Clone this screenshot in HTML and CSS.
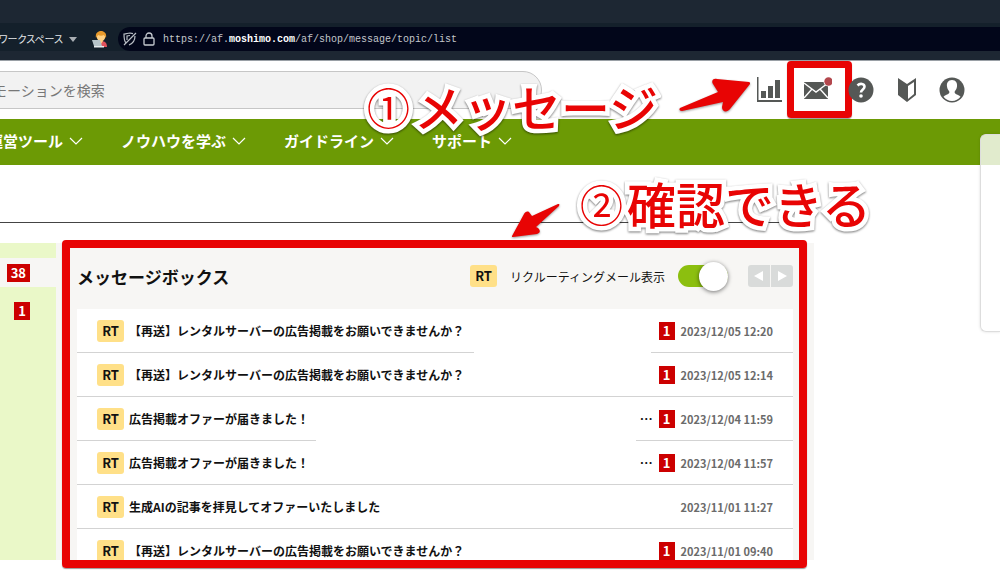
FILE: index.html
```html
<!DOCTYPE html>
<html lang="ja">
<head>
<meta charset="utf-8">
<title>メッセージボックス</title>
<link rel="stylesheet" href="styles.css">
</head>
<body>
<div class="browser">
  <div class="toolbar">
    <span class="workspace">ワークスペース</span>
    <svg class="caret" width="8" height="5" viewBox="0 0 8 5"><path d="M0 0h8L4 5z" fill="#a9aeb3"/></svg>
    <svg class="avatar" width="16" height="17" viewBox="0 0 16 17"><path d="M3 16c0-5 2-6 6-6s6 2 6 6z" fill="#e0525c"/><circle cx="9" cy="6" r="4.200" fill="#ffd083"/><path d="M4 7C3 2 6 0 9 0s6 2 5 7l-2-3c-2 1-4 1-6 0z" fill="#e89a2c"/><path d="M7 10h4l-2 3z" fill="#ffd083"/><path d="M0 9h8l2 6H2z" fill="#b6c4c9"/><path d="M2 15h10v1.500H2z" fill="#e6ecee"/></svg>
    <div class="address">
      <svg width="14" height="14" viewBox="0 0 14 14" fill="none" stroke="#b9bec5" stroke-width="1.200"><path d="M3 11C1 9 1 6 1 2c3 0 3-1 6-1l3 .7M12 4c0 4-1 7-6 9M1 13 13 1M4 8V4l3-.5"/></svg>
      <svg width="12" height="14" viewBox="0 0 12 14" fill="none" stroke="#c6cad0" stroke-width="1.300"><rect x="1" y="6" width="10" height="7" rx="1"/><path d="M3 6V4a3 3 0 0 1 6 0v2"/></svg>
      <span class="url">https://af.<b>moshimo.com</b>/af/shop/message/topic/list</span>
    </div>
  </div>
</div>

<header class="header">
  <input class="search" type="search" placeholder="モーションを検索" aria-label="プロモーションを検索">
  <div class="tools">
    <button class="tool" aria-label="レポート"><svg width="26" height="26" viewBox="0 0 26 26" fill="#555856"><path d="M1 0h1.500v23H26v2H1zM5 14h5v7H5zM12 9h5v12h-5zM19 3h5v18h-5z"/></svg></button>
    <button class="tool mail" aria-label="メッセージ"><svg width="30" height="26" viewBox="0 0 30 26"><path d="M2 5h24v17H2z" fill="#555856"/><path d="m2 6 12 9L26 6M2 21l8-9M26 21l-8-9" fill="none" stroke="#fff" stroke-width="1.400"/><circle cx="26.500" cy="4.500" r="5" fill="#fff"/><circle cx="26.500" cy="4.500" r="4.200" fill="#b3474d"/></svg><span class="frame frame-mail"></span></button>
    <button class="tool" aria-label="ヘルプ"><svg width="26" height="26" viewBox="0 0 26 26"><circle cx="13" cy="13" r="12.500" fill="#555856"/><path d="M9.500 8.500C12 6 16.500 6.500 16.500 9.800c0 2.600-3.500 2.700-3.500 5.700" fill="none" stroke="#fff" stroke-width="2.600"/><circle cx="13" cy="19" r="1.800" fill="#fff"/></svg></button>
    <button class="tool" aria-label="初心者ガイド"><svg width="20" height="26" viewBox="0 0 20 26"><path d="m1 1 9 6 9-6v17l-9 7-9-7z" fill="#555856"/><path d="m11 9 6-4v12l-6 5z" fill="#fff"/></svg></button>
    <button class="tool" aria-label="アカウント"><svg width="26" height="26" viewBox="0 0 26 26"><circle cx="13" cy="13" r="12.500" fill="#555856"/><path d="M13 3c-4 0-5.500 3-5 6.500C8.300 12 9.500 13 10.300 14.500c.5 2-1 2.500-2.800 3.200-1.500.6-2.500 1.300-3 2 2 2.500 5 4.300 8.500 4.300s6.500-1.800 8.500-4.300c-.5-.7-1.500-1.400-3-2-1.800-.7-3.300-1.200-2.800-3.200.8-1.500 2-2.500 2.300-5C18.500 6 17 3 13 3z" fill="#fff"/></svg></button>
  </div>
</header>

<nav class="nav">
  <a href="#tools">運営ツール<svg width="14" height="8" viewBox="0 0 14 8"><path d="m1 1 6 6 6-6"/></svg></a>
  <a href="#learn">ノウハウを学ぶ<svg width="14" height="8" viewBox="0 0 14 8"><path d="m1 1 6 6 6-6"/></svg></a>
  <a href="#guide">ガイドライン<svg width="14" height="8" viewBox="0 0 14 8"><path d="m1 1 6 6 6-6"/></svg></a>
  <a href="#support">サポート<svg width="14" height="8" viewBox="0 0 14 8"><path d="m1 1 6 6 6-6"/></svg></a>
</nav>

<main class="main">
  <div class="rule"></div>
  <div class="columns">
    <aside class="side">
      <a class="side-item current" href="#inbox"><span class="count">38</span></a>
      <a class="side-item" href="#unread"><span class="count">1</span></a>
    </aside>
    <section class="panel">
      <div class="panel-body">
        <div class="panel-head">
          <h1>メッセージボックス</h1>
          <span class="rt">RT</span>
          <label class="switch">リクルーティングメール表示<input type="checkbox" role="switch" checked></label>
          <div class="pager">
            <button aria-label="前へ"><svg width="10" height="10" viewBox="0 0 10 10"><path d="M9 0v10L0 5z" fill="#fff"/></svg></button>
            <button aria-label="次へ"><svg width="10" height="10" viewBox="0 0 10 10"><path d="M1 0v10l9-5z" fill="#fff"/></svg></button>
          </div>
        </div>
        <ul class="list">
          <li class="wide"><div class="subject"><span class="rt">RT</span><a href="#m1">【再送】レンタルサーバーの広告掲載をお願いできませんか？</a></div><div class="meta"><span class="count">1</span><time>2023/12/05 12:20</time></div></li>
          <li class="wide full"><div class="subject"><span class="rt">RT</span><a href="#m2">【再送】レンタルサーバーの広告掲載をお願いできませんか？</a></div><div class="meta"><span class="count">1</span><time>2023/12/05 12:14</time></div></li>
          <li class="short"><div class="subject"><span class="rt">RT</span><a href="#m3">広告掲載オファーが届きました！</a></div><div class="meta"><span class="more">…</span><span class="count">1</span><time>2023/12/04 11:59</time></div></li>
          <li class="short full"><div class="subject"><span class="rt">RT</span><a href="#m4">広告掲載オファーが届きました！</a></div><div class="meta"><span class="more">…</span><span class="count">1</span><time>2023/12/04 11:57</time></div></li>
          <li class="full"><div class="subject"><span class="rt">RT</span><a href="#m5">生成AIの記事を拝見してオファーいたしました</a></div><div class="meta"><time>2023/11/01 11:27</time></div></li>
          <li class="full"><div class="subject"><span class="rt">RT</span><a href="#m6">【再送】レンタルサーバーの広告掲載をお願いできませんか？</a></div><div class="meta"><span class="count">1</span><time>2023/11/01 09:40</time></div></li>
        </ul>
      </div>
      <span class="frame frame-panel"></span>
    </section>
  </div>
</main>

<div class="float-tab"></div>

<p class="note note-one"><span>①</span>メッセージ</p>
<svg class="arrow arrow-one" width="74" height="40" viewBox="0 0 74 40"><path d="M1 33 39 17 34 9c-2-3 0-6 4-5l32 3c1 0 1 1 1 2L51 34c-3 4-8 3-8-2l1-5L3 36c-3 0-3-2-2-3z"/></svg>
<p class="note note-two"><span>②</span>確認できる</p>
<svg class="arrow arrow-two" width="50" height="38" viewBox="0 0 50 38"><path d="M47 2 21 14l-3-4c-2-1-4 0-5 2L1 34c0 1 0 1 1 1l24-3c3-1 4-3 1-6l-2-1L48 4c1-2 0-2-1-2z"/></svg>
</body>
</html>
```
FILE: styles.css
```css
* { box-sizing: border-box; }

body {
  margin: 0;
  position: relative;
  min-height: 100vh;
  overflow: hidden;
  background: #fff;
  color: #111;
  font-family: "Noto Sans CJK JP", sans-serif;
  font-size: 12px;
}

button { border: 0; padding: 0; background: none; }
svg { display: block; flex: none; }
a { color: inherit; text-decoration: none; }

.browser {
  padding: 23px 0 9px;
  background: #1d2733;
  border-bottom: 1px solid #9aa0a6;
}
.toolbar {
  display: flex;
  align-items: center;
  padding-top: 4px;
  background: #14202b;
  color: #e6e8ea;
}
.workspace {
  font-size: 10px;
  line-height: 16px;
  width: 63px;
  display: flex;
  justify-content: flex-end;
  white-space: nowrap;
  font-feature-settings: "palt";
}
.caret { margin-left: 6px; }
.avatar { margin-left: 15px; }
.address {
  flex: 1;
  display: flex;
  align-items: center;
  gap: 6px;
  height: 24px;
  margin-left: 10px;
  padding-left: 5px;
  border-radius: 12px 0 0 12px;
  background: #02061a;
}
.url {
  font-family: "Liberation Mono", monospace;
  font-size: 10px;
  color: #c3c6cc;
  padding-left: 2px;
}
.url b { color: #fff; }

.header {
  display: flex;
  align-items: center;
  justify-content: space-between;
  height: 58px;
  padding-right: 35px;
}
.search {
  width: 57%;
  height: 38px;
  margin-left: -8px;
  padding: 0;
  border: 1px solid #c6c6c6;
  border-radius: 0 19px 19px 0;
  background: #f2f2f2;
  font: 14px "Noto Sans CJK JP", sans-serif;
  appearance: none;
}
.search::placeholder { color: #777; opacity: 1; }
.tools { display: flex; gap: 20px; }
.tool { position: relative; }
.tool:nth-child(3) { margin-left: -4px; }
.tool:nth-child(4) { margin: 0 2px 0 3px; }

.frame {
  position: absolute;
  border: 8px solid #e80404;
  border-radius: 4px;
  box-shadow: 0 1px 1px #0006;
  pointer-events: none;
}
.frame-mail { inset: -16px -20px -15px -15px; border-width: 7px; }
.frame-panel { inset: -3px 7px -8px 6px; }

.nav {
  display: flex;
  align-items: center;
  gap: 38px;
  height: 46px;
  margin-left: -12px;
  background: #6c9a05;
  color: #fff;
  font-size: 15px;
  font-weight: 700;
}
.nav a { display: flex; align-items: center; gap: 6px; line-height: 20px; padding-bottom: 2px; white-space: nowrap; }
.nav path { fill: none; stroke: #fff; stroke-width: 1.200; }

.main { padding-top: 57px; }
.rule { width: 81%; border-top: 1px solid #444; }
.columns { display: flex; width: 81.4%; margin-top: 20px; }
.side { width: 56px; padding-top: 15px; background: #eaf8c8; }
.side-item {
  display: flex;
  justify-content: flex-end;
  align-items: center;
  height: 29px;
  padding-right: 26px;
}
.side-item.current { background: #f7f6f4; margin-bottom: 9px; }
.count {
  padding: 0 4px;
  background: #c00;
  color: #fff;
  font-size: 13px;
  font-weight: 700;
  line-height: 18px;
}

.panel { position: relative; flex: 1; background: #f7f6f4; }
.panel-body { height: 317px; padding: 0 21px; overflow: hidden; }
.panel-head { display: flex; align-items: center; height: 66px; }
h1 { flex: 1; margin: 0; font-size: 17px; font-weight: 700; }
.rt {
  flex: none;
  width: 27px;
  border-radius: 3px;
  background: #ffe088;
  font-size: 13px;
  font-weight: 700;
  line-height: 22px;
  text-align: center;
}
.switch {
  display: flex;
  align-items: center;
  gap: 13px;
  margin-left: 13px;
  font-size: 12px;
}
.switch input {
  appearance: none;
  display: flex;
  justify-content: flex-end;
  align-items: center;
  width: 50px;
  height: 22px;
  margin: 0;
  border-radius: 11px;
  background: #8cbf0f;
}
.switch input::before {
  content: "";
  flex: none;
  width: 29px;
  height: 29px;
  border-radius: 50%;
  background: #fff;
  box-shadow: 0 1px 4px #0008;
}
.pager { display: flex; gap: 1px; margin-left: 20px; }
.pager button {
  display: grid;
  place-items: center;
  width: 22px;
  height: 22px;
  background: #d9dbda;
}
.pager button:first-child { border-radius: 3px 0 0 3px; }
.pager button:last-child { border-radius: 0 3px 3px 0; }

.list { margin: 0; padding: 0; list-style: none; background: #fff; font-weight: 700; }
.list li { display: flex; justify-content: space-between; height: 44px; }
.subject, .meta {
  display: flex;
  align-items: center;
  border-bottom: 1px solid #d3d3d3;
}
.subject { gap: 5px; padding-left: 20px; overflow: hidden; white-space: nowrap; }
.wide .subject { flex: 0 0 55.4%; }
.short .subject { flex: 0 0 33.4%; }
.list .full .subject { flex: 1; }
.meta { justify-content: flex-end; gap: 6px; padding-right: 20px; min-width: 142px; }
.short .meta { min-width: 157px; }
.more { font-size: 13px; }
time { color: #6b6b6b; font-size: 11px; }

.float-tab {
  position: absolute;
  top: 134px;
  right: 0;
  width: 20px;
  height: 198px;
  border: 1px solid #ddd;
  border-right: 0;
  border-radius: 6px 0 0 6px;
  background: #fffc;
  box-shadow: 0 0 3px #0002;
}

.note {
  position: absolute;
  display: flex;
  align-items: center;
  gap: 4px;
  margin: 0;
  color: #e80404;
  font-size: 49px;
  font-weight: 500;
  line-height: 60px;
  white-space: nowrap;
  -webkit-text-stroke: 9px #fff;
  paint-order: stroke fill;
  stroke-linejoin: round;
  filter: drop-shadow(0 1px 1px #0008);
}
.note span { font-size: 43px; font-weight: 400; }
.note-one { left: 367px; top: 76px; }
.note-two { left: 580px; top: 173px; }
.arrow { position: absolute; fill: #e80404; filter: drop-shadow(0 1px 1px #0006); }
.arrow-one { left: 679px; top: 75px; }
.arrow-two { left: 511px; top: 202px; }
```
